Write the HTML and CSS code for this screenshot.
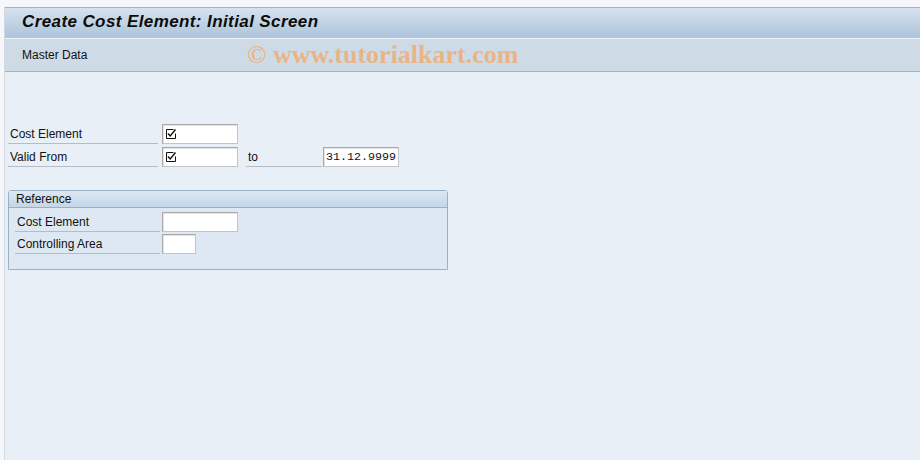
FILE: index.html
```html
<!DOCTYPE html>
<html>
<head>
<meta charset="utf-8">
<link rel="stylesheet" href="styles.css">
</head>
<body>
<div class="screen">
  <div class="titlebar"><h1 class="title">Create Cost Element: Initial Screen</h1></div>
  <div class="toolbar">
    <span class="tb-item">Master Data</span>
    <span class="watermark">© www.tutorialkart.com</span>
  </div>
  <div class="content">
    <div class="row">
      <div class="label w-main">Cost Element</div>
      <div class="input w76 gap4"><svg class="chk" width="12" height="12" viewBox="0 0 12 12"><path d="M8.5 1.5H1.5V10.5H10.5V5.5" fill="none" stroke="#111" stroke-width="1"/><path d="M3 5.5L5.2 8L10.5 1.5" fill="none" stroke="#111" stroke-width="1.4"/></svg></div>
    </div>
    <div class="row">
      <div class="label w-main">Valid From</div>
      <div class="input w76 gap4"><svg class="chk" width="12" height="12" viewBox="0 0 12 12"><path d="M8.5 1.5H1.5V10.5H10.5V5.5" fill="none" stroke="#111" stroke-width="1"/><path d="M3 5.5L5.2 8L10.5 1.5" fill="none" stroke="#111" stroke-width="1.4"/></svg></div>
      <div class="label w-to">to</div>
      <div class="input w76 gap1 mono">31.12.9999</div>
    </div>

    <div class="group">
      <div class="group-head">Reference</div>
      <div class="group-body">
        <div class="row row-g">
          <div class="label w-grp">Cost Element</div>
          <div class="input w76 gap2"></div>
        </div>
        <div class="row row-g">
          <div class="label w-grp">Controlling Area</div>
          <div class="input w34 gap2"></div>
        </div>
      </div>
    </div>
  </div>
</div>
</body>
</html>
```

FILE: styles.css
```css
html, body {
  margin: 0;
  padding: 0;
  height: 100%;
}
body {
  background: #f6f7fa;
  padding: 7px 0 0 4px;
  box-sizing: border-box;
  font-family: "Liberation Sans", "DejaVu Sans", sans-serif;
  font-size: 12px;
  color: #111;
}
.screen {
  height: 100%;
  background: #e8eff7;
  border-left: 1px solid #d2d8df;
  display: flex;
  flex-direction: column;
}
.titlebar {
  height: 30px;
  box-sizing: content-box;
  flex-shrink: 0;
  border-top: 1px solid #a5b1bd;
  background: linear-gradient(#d6e2ef, #c3d4e5 45%, #adc4da);
  display: flex;
  align-items: center;
  padding-left: 17px;
}
.title {
  margin: 0 0 2px 0;
  font-size: 17px;
  font-weight: bold;
  font-style: italic;
  color: #0c0c0c;
  letter-spacing: 0.4px;
}
.toolbar {
  height: 32px;
  flex-shrink: 0;
  border-top: 1px solid #eef3f8;
  border-bottom: 1px solid #a5b1bd;
  background: #cedbe6;
  display: flex;
  align-items: center;
  padding-left: 17px;
}
.tb-item {
  width: 225px;
  font-size: 12px;
}
.watermark {
  font-family: "Liberation Serif", "DejaVu Serif", serif;
  font-weight: bold;
  font-size: 26px;
  color: #e9b586;
  padding-bottom: 1px;
}
.content {
  padding: 52px 0 0 3px;
}
.row {
  display: flex;
  height: 20px;
  margin-bottom: 3px;
}
.label {
  box-sizing: border-box;
  border-bottom: 1px solid #b4bcc4;
  padding-left: 2px;
  line-height: 21px;
  height: 20px;
}
.w-main { width: 150px; }
.w-to { width: 76px; margin-left: 8px; }
.w-grp { width: 145px; }
.input {
  box-sizing: border-box;
  height: 20px;
  background: #fff;
  border: 1px solid #a9a9a9;
  border-right-color: #c4c4c4;
  border-bottom-color: #c4c4c4;
  box-shadow: inset 1px 1px 0 #e4e4e4;
  display: flex;
  align-items: center;
  padding-left: 2px;
}
.w76 { width: 76px; }
.w34 { width: 34px; }
.gap4 { margin-left: 4px; }
.gap1 { margin-left: 1px; }
.gap2 { margin-left: 2px; }
.chk { display: block; }
.mono {
  font-family: "Liberation Mono", "DejaVu Sans Mono", monospace;
  font-size: 11.7px;
}
.group {
  margin-top: 23px;
  width: 440px;
  box-sizing: border-box;
  border: 1px solid #97b0cb;
  border-radius: 3px 3px 0 0;
  background: #dee8f2;
}
.group-head {
  height: 16px;
  line-height: 16px;
  padding-left: 7px;
  background: linear-gradient(#dde7f2, #c4d6e8);
  border-bottom: 1px solid #97b0cb;
}
.group-body {
  padding: 4px 0 13px 6px;
}
.row-g {
  margin-bottom: 2px;
}
```
